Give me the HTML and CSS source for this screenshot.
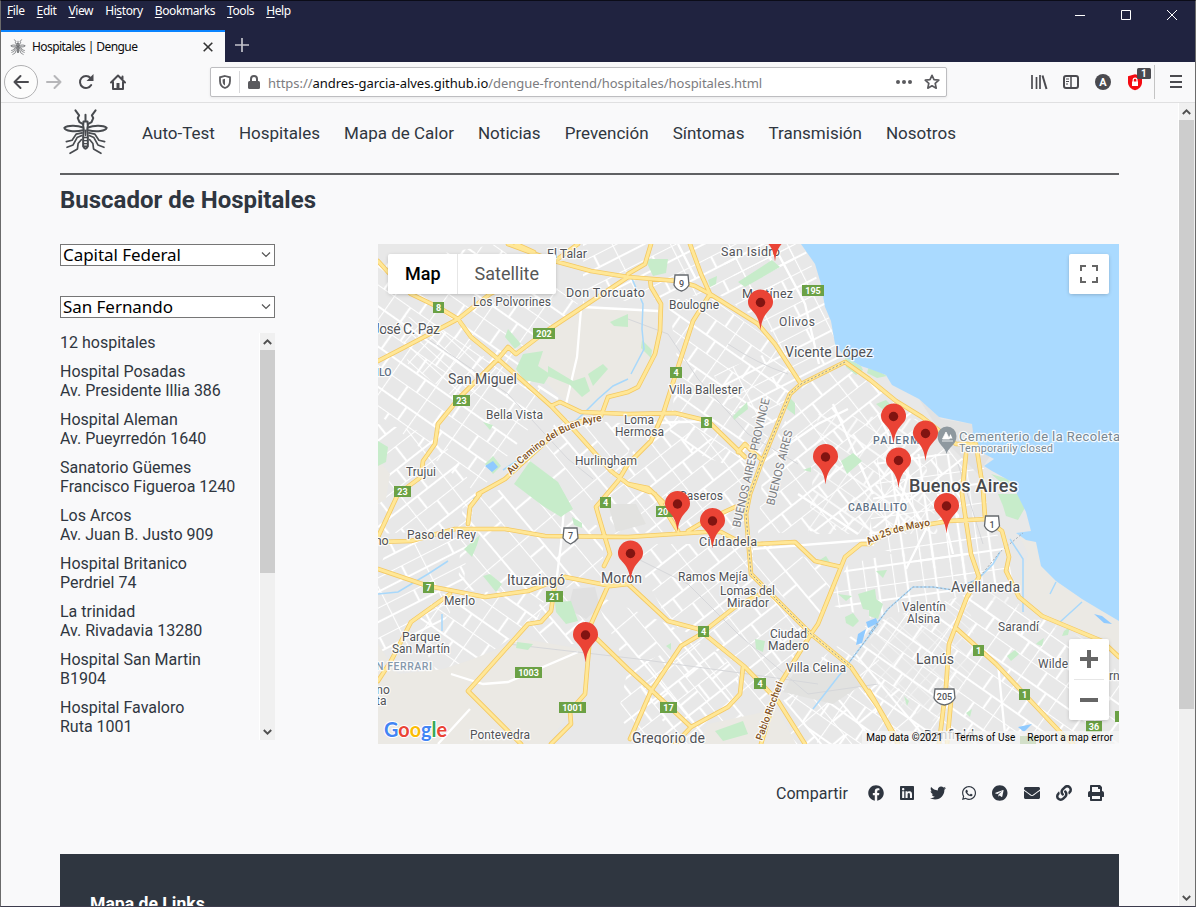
FILE: index.html
```html
<!DOCTYPE html>
<html lang="es">
<head>
<meta charset="utf-8">
<title>Hospitales | Dengue</title>
<link rel="stylesheet" href="styles.css">
</head>
<body>
<div class="window">
<header class="chrome">
  <div class="menubar">
    <nav class="menus"><span><u>F</u>ile</span><span><u>E</u>dit</span><span><u>V</u>iew</span><span>Hi<u>s</u>tory</span><span><u>B</u>ookmarks</span><span><u>T</u>ools</span><span><u>H</u>elp</span></nav>
    <svg class="winctl" width="102" height="12" viewBox="0 0 102 12"><path d="M0 5.5h10M46.500 .5h9v9h-9zM92 0l10 10M102 0L92 10" fill="none" stroke="#fff"/></svg>
  </div>
  <div class="tabs">
    <div class="tab">
      <svg width="16" height="16" viewBox="185 322 140 140"><use href="#bug"/></svg>
      <span class="tabname">Hospitales | Dengue</span>
      <svg width="10" height="10" viewBox="0 0 10 10"><path d="M.7.700l8.600 8.600M9.300.7L.7 9.300" stroke="#333" stroke-width="1.600"/></svg>
    </div>
    <svg class="plus" width="14" height="14" viewBox="0 0 14 14"><path d="M7 0v14M0 7h14" stroke="#c4c4cc" stroke-width="1.700"/></svg>
  </div>
</header>
<div class="toolbar">
  <div class="back"><svg width="16" height="14" viewBox="0 0 16 14"><path d="M15 7H1.500M7.500 1l-6 6 6 6" class="ico"/></svg></div>
  <svg class="fwd" width="16" height="14" viewBox="0 0 16 14"><path d="M1 7h13.500M8.500 1l6 6-6 6" class="ico"/></svg>
  <svg class="reload" width="16" height="16" viewBox="0 0 16 16"><path d="M13.200 11A6 6 0 1 1 12.500 4" class="ico"/><path d="M15.500 0v7h-7z" fill="#4a4a4f"/></svg>
  <svg class="home" width="16" height="16" viewBox="0 0 16 16"><path d="M1 8.500L8 1.500l7 7M3 7.500V15h10V7.500M12.500 6V2.500" class="ico"/><path d="M6.500 9h3v6h-3z" fill="#4a4a4f"/></svg>
  <div class="url">
    <svg width="12" height="14" viewBox="0 0 12 14"><path d="M6 1l5 1.300V6c0 3.500-2 6-5 7-3-1-5-3.500-5-7V2.300z" fill="none" stroke="#5a5a5e" stroke-width="1.800"/><path d="M6 3.800v6.700C4.200 9.500 3.600 8 3.600 6V4.400z" fill="#5a5a5e"/></svg>
    <i class="urlsep"></i>
    <svg width="12" height="14" viewBox="0 0 12 14"><path d="M3 7V4a3 3 0 0 1 6 0v3" fill="none" stroke="#5a5a5e" stroke-width="2"/><rect y="6" width="12" height="8" rx="1.500" fill="#5a5a5e"/></svg>
    <span class="address">https://<b>andres-garcia-alves.github.io</b>/dengue-frontend/hospitales/hospitales.html</span>
    <svg width="16" height="4" viewBox="0 0 16 4"><g fill="#5a5a5e"><circle cx="2" cy="2" r="2"/><circle cx="8" cy="2" r="2"/><circle cx="14" cy="2" r="2"/></g></svg>
    <svg class="star" width="16" height="16" viewBox="0 0 16 16"><path d="M8 1.300l2 4.400 4.800.5-3.600 3.200 1 4.800L8 11.800l-4.200 2.400 1-4.800L1.200 6.200 6 5.700z" fill="none" stroke="#5a5a5e" stroke-width="1.700" stroke-linejoin="round"/></svg>
  </div>
  <svg class="tools" width="158" height="34" viewBox="0 0 158 34">
    <g fill="none" stroke="#4a4a4f" stroke-width="2"><path d="M2 10v14M6.500 12v12M10 10v14" stroke-width="1.700"/><path d="M12.500 10.500L16.500 24"/><rect x="34" y="11" width="14" height="12" rx="2"/><path d="M41 11v12" stroke-width="1.500"/><path d="M36 14h3M36 16.500h3M36 19h2" stroke-width="1"/><path d="M140 11h12M140 17h12M140 22h12"/></g>
    <circle cx="73" cy="17" r="8" fill="#4a4a4f"/><text x="69.300" y="21" class="acct">A</text>
    <path d="M105 9.200l7 2v6c0 4-3 7-7 8-4-1-7-4-7-8v-6z" fill="#f40b12"/><path d="M103.200 17v-2a1.900 1.900 0 0 1 3.800 0v2" fill="none" stroke="#fff" stroke-width="1.200"/><rect x="102" y="16.500" width="6" height="4.500" fill="#fff"/>
    <rect x="107" y="3" width="14" height="11" rx="1.500" fill="#4a4a4f"/><text x="111" y="12" class="count">1</text>
    <path d="M124.500 0v34" stroke="#c4c4c4"/>
  </svg>
</div>
<div class="viewport">
<main class="page">
  <nav class="site">
    <svg width="47" height="47" viewBox="185 322 140 140"><defs><g id="bug" fill="none" stroke="#484b4f" stroke-width="6" stroke-linecap="round" stroke-linejoin="round">
      <path d="M255 342v18M249 362h12l1 12-2 14 2 20v28q-7 14-14 0v-28l2-20-2-14z"/><path d="M250 410h10M250 419h10M250 428h10M250 436h10" stroke-width="4"/><path d="M255 388v16" stroke-width="4"/>
      <path d="M248 380c-18-7-46-7-56 1 2 10 30 13 56 7M262 380c18-7 46-7 56 1-2 10-30 13-56 7"/>
      <path d="M248 370l-11-6-5-12 4-8-11-15M262 370l11-6 5-12-4-8 11-15"/>
      <path d="M245 396l-18 4-12 18-17 4M265 396l18 4 12 18 17 4M244 404l-14 6-12 22-18 7M266 404l14 6 12 22 18 7M243 416l-10 12-2 16-22 13M267 416l10 12 2 16 22 13" stroke-width="5"/></g></defs><use href="#bug"/></svg>
    <a>Auto-Test</a><a>Hospitales</a><a>Mapa de Calor</a><a>Noticias</a><a>Prevención</a><a>Síntomas</a><a>Transmisión</a><a>Nosotros</a>
  </nav>
  <h1>Buscador de Hospitales</h1>
  <section class="finder">
    <div class="side">
      <div class="combo"><select><option>Capital Federal</option></select><svg width="10" height="6" viewBox="0 0 10 6"><path d="M1 .5l4 4 4-4" fill="none" stroke="#555" stroke-width="1.200"/></svg></div>
      <div class="combo second"><select><option>San Fernando</option></select><svg width="10" height="6" viewBox="0 0 10 6"><path d="M1 .5l4 4 4-4" fill="none" stroke="#555" stroke-width="1.200"/></svg></div>
      <div class="results">
        <div class="list">
          <p>12 hospitales</p>
          <p>Hospital Posadas<br>Av. Presidente Illia 386</p>
          <p>Hospital Aleman<br>Av. Pueyrredón 1640</p>
          <p>Sanatorio Güemes<br>Francisco Figueroa 1240</p>
          <p>Los Arcos<br>Av. Juan B. Justo 909</p>
          <p>Hospital Britanico<br>Perdriel 74</p>
          <p>La trinidad<br>Av. Rivadavia 13280</p>
          <p>Hospital San Martin<br>B1904</p>
          <p>Hospital Favaloro<br>Ruta 1001</p>
        </div>
        <div class="bar small"><svg width="9" height="6" viewBox="0 0 9 6"><path d="M.8 5l3.700-3.700L8.200 5" class="chev"/></svg><i></i><svg width="9" height="6" viewBox="0 0 9 6"><path d="M.8 1l3.700 3.700L8.200 1" class="chev"/></svg></div>
      </div>
    </div>
    <div class="map">
      <svg class="tiles" width="741" height="500" viewBox="0 0 741 500">
        <defs>
          <pattern id="s1" width="17" height="11" patternUnits="userSpaceOnUse" patternTransform="rotate(42)"><path d="M0 0h17M0 0v11" class="st"/></pattern>
          <pattern id="s2" width="46" height="34" patternUnits="userSpaceOnUse" patternTransform="rotate(-38)"><path d="M0 0h46M0 0v34M0 19h46M27 0v19M14 19v15" class="st"/></pattern>
          <pattern id="s3" width="52" height="27" patternUnits="userSpaceOnUse" patternTransform="rotate(-27)"><path d="M0 0h52M0 0v27M0 13h52M31 0v13" class="st"/></pattern>
          <pattern id="s4" width="29" height="34" patternUnits="userSpaceOnUse" patternTransform="rotate(-8)"><path d="M0 0h29M0 0v34M0 15h29M13 0v34" class="st"/></pattern>
          <pattern id="s5" width="64" height="42" patternUnits="userSpaceOnUse" patternTransform="rotate(50)"><path d="M0 0h64M0 0v42M0 24h64M36 0v24M18 24v18" class="st"/></pattern>
          <pattern id="s6" width="43" height="33" patternUnits="userSpaceOnUse" patternTransform="rotate(35)"><path d="M0 0h43M0 0v33M0 18h43M20 0v18M31 18v15" class="st"/></pattern>
          <g id="pin"><path d="M0 27.500C-1 19-3 14-7 9.500-10 6-12.500 4-12.500-.5a12.500 12.500 0 0 1 25 0C12.500 4 10 6 7 9.500 3 14 1 19 0 27.500z" fill="#ea4335"/><circle r="4.700" fill="#811411"/></g>
          <path id="ayre" d="M133 231Q178 181 226 177"/><path id="mayo" d="M491 301Q512 287 557 281"/>
        </defs>
        <rect width="741" height="500" fill="#e8e8e8"/>
        <g>
          <path d="M0 20L120 0 200 60 150 110 170 160 100 250 0 170z" fill="url(#s6)"/>
          <path d="M20 70L75 85 120 125 85 160 30 120z" fill="url(#s1)"/>
          <path d="M205 0H425L380 75 340 50 205 60z" fill="url(#s3)"/>
          <path d="M290 55L335 55 398 100 423 140 405 155 375 230 290 200 300 120z" fill="url(#s6)"/>
          <path d="M335 130L400 105 423 140 412 150 395 190 350 155z" fill="url(#s3)"/>
          <path d="M340 10L425 0 445 50 455 90 467 118 425 140 385 75z" fill="url(#s3)"/>
          <path d="M425 142L467 120 520 160 590 205 580 280 380 290 385 220z" fill="url(#s2)"/>
          <path d="M440 170L540 175 560 290 430 290z" fill="url(#s6)" opacity=".8"/>
          <path d="M500 210L605 210 610 275 625 300 640 350 600 340 490 300z" fill="url(#s4)"/>
          <path d="M375 295L460 325 440 380 375 330z" fill="url(#s5)"/>
          <path d="M470 320L600 290 590 350 495 375 450 360z" fill="url(#s4)"/>
          <path d="M490 380L590 350 660 370 741 440V500H440L400 445z" fill="url(#s6)"/>
          <path d="M490 380L590 350 600 420 560 480 500 450z" fill="url(#s1)" opacity=".45"/>
          <path d="M610 340L660 372 720 402 741 430 700 440 640 395 580 385z" fill="url(#s6)" opacity=".6"/>
          <path d="M250 300L375 300 375 335 430 390 400 450 365 423 290 377z" fill="url(#s2)"/>
          <path d="M215 350L290 380 365 425 400 460 427 500H300L250 425z" fill="url(#s5)"/>
          <path d="M250 425L320 395 360 425 360 455 310 485 260 500 240 470z" fill="url(#s2)"/>
          <path d="M290 170L370 215 370 285 235 290 225 240z" fill="url(#s2)"/>
          <path d="M0 180L60 190 100 250 90 285 0 290z" fill="url(#s2)"/>
          <path d="M85 255L145 240 225 285 225 340 125 350 80 345z" fill="url(#s5)"/>
          <path d="M10 300L90 290 85 350 50 400 0 420 0 330z" fill="url(#s3)"/>
          <path d="M60 350L170 345 160 375 110 410 60 430 35 385z" fill="url(#s6)"/>
          <path d="M170 350L225 345 210 400 130 400z" fill="url(#s5)"/>
          <path d="M180 175L260 180 240 240 200 265 145 225z" fill="url(#s5)"/>
          <path d="M400 460L490 400 560 500H425z" fill="url(#s5)"/>
        </g>
        <g fill="#ebe9e4">
          <path d="M203 63L283 68 278 110 260 145 228 155 215 170 185 155 148 118 150 100 165 92z"/>
          <path d="M0 260V215L12 230 8 255zM0 400L20 430 65 425 95 415 145 395 205 405 207 450 190 470 170 500H0z"/>
          <path d="M330 480L400 465 418 500H320zM640 289L658 298 663 322 704 355 741 377V412L700 390 660 368 640 340 650 310z"/>
          <path d="M230 260h28l10 20-30 8zM415 430l60-5 10 15-30 20-50-12z" fill="#e2e2e0"/>
          <path d="M195 345l22-2 5 20-14 12-18-10z" fill="#e0e0e0"/>
          <path d="M541 155L563 175 595 180 600 205 612 212 600 230 570 200z" fill="#e2e2e2"/>
        </g>
        <path d="M203 65L199 113 188 160M205 63L280 67M60 500L92 465M73 430L105 440 130 438 200 408M160 142L180 155M187 253L183 300 178 340M250 180L330 177M375 305L500 295M382 220L440 180 470 165M620 420l8 80M560 250l15 60M500 170l30 60-15 60M455 160l40 90M420 250l60 40M518 235l30 50-20 40M300 0l18 35M395 0l32 60 14 60" fill="none" stroke="#fff" stroke-width="2.300"/>
        <g fill="none" stroke="#d6d7da" stroke-width="1"><path d="M50 95L130 150 190 215 215 235M250 75L290 90 320 135 370 190 420 220M350 100q30 20 60 30M250 310L310 340 360 390 430 450 500 440M130 400L260 415 370 430 440 440M580 220L605 300"/></g>
        <g fill="#c7ecca">
          <path d="M130 85l13 15-6 5-10-12zM145 110l20-3-5 15 12 8-6 10-20-4-8-11zM170 122l25 15 12-4 5 14-8 6-12-12-22-9zM210 130l15-10 5 5-15 17zM232 78l18-8v13l-14-1zM136 240l16-23 28 21 15 27-8 5-4 3-18-11zM0 197l10 6-2 15-8 4zM105 178l10 3-3 5zM107 220l8-8 8 10-8 8z"/>
          <path d="M267 15h23l-2 14-13 3zM360 38l34-22 8 7-35 20zM330 36l9-4-1 8-6 3zM264 96l10 10-1 8-10-10zM355 172l14-14 1 7-14 11zM410 152l7 7v12l-8-6zM463 217l12-8 9 8-15 13zM467 113l16 9 2 4-7 5-10-8zM491 122l18 10-10 2-10-5zM498 160l10-4 8 8-8 4zM613 230l17 5 5 11-10-6zM620 250h25l3 12-8 14-12-4-3-10zM425 226l8-3v5z"/>
          <path d="M105 332l7-2 12 10-6 8zM86 305l8 8 5-12 3-10M177 358l16-1 7 20-12 3-10-12zM139 398l16 2-5 6-12-2zM194 273l10 6v5l-8-3zM337 487l28-10 5 13-25 7zM377 395l10 2-2 11-7-3zM480 350l17-5 3 23-15-3zM460 350l14 2-6 5zM467 373l8-4 6 8-6 6-7-4zM491 350l14 10-5 15-9-3zM498 327l11-1-4 8zM440 317l8-5 5 8zM686 387l6-4-2 8-6 1zM660 398l6-4-2 8-6-2zM629 412l8-6 4 4-8 7zM526 452l5 5-2 5zM588 469l6-4-2 8zM288 402l5-3v7z"/>
        </g>
        <path d="M423 0L437 20 443 40 447 63 453 77 457 100 467 113 483 122 492 125 508 131 514 141 541 155 561 173 594 180 595 188 592 192 601 207 616 215 606 222 614 227 634 238 640 252 648 268 653 287 638 289 648 296 658 298 663 322 678 337 704 355 724 367 741 377V0z" fill="#aadaff"/>
        <g fill="none" stroke="#a8d8fb" stroke-width="1.500"><path d="M252 30L265 60 264 85 266 105 253 130M250 135L235 142 220 155 205 170 192 182 125 226M102 250L95 255M0 350L20 348 50 330 70 317M491 390L510 365 535 343 555 343 575 346 600 335 615 320 622 308M632 295L645 315 645 368M672 350l6-12M682 378l22-20M500 380L470 420 435 465M64 370v17" /></g>
        <path d="M107 222l8-5 5 6-6 5zM488 378l10-4 2 5-10 5zM480 390l8-5-4 14-6 2zM716 370l8 2 10 8-8-1zM640 483l14-3-8 8z" fill="#8fcaff"/>
        <path d="M491 390L510 365 535 343 555 343 575 346 600 335 622 308 645 289M470 420L500 380" fill="none" stroke="#a2a9b0" stroke-dasharray="2 2"/>
        <g id="roads" fill="none" stroke-linejoin="round" stroke-linecap="round">
          <g stroke="#f4c963" stroke-width="4.600"><use href="#rd"/></g>
          <g stroke="#ffe797" stroke-width="3"><path id="rd" d="M130 0L157 10 180 18 213 27 250 33 300 37 317 42 332 50 380 80 397 100 423 140M138 0l18 8M0 17L10 28 33 50 60 63 80 75 93 93 120 115 173 162 197 187 233 227 250 240 272 248M0 117L27 103 80 75 112 50 173 20 200 0M250 33L167 88 138 110 130 103 120 115 82 153 60 180 57 200 45 217 43 233 20 250 0 293M100 250L127 235 140 223 173 193 193 180 223 172 230 153 250 148 260 143 277 110 282 87 283 60 273 43 272 35M250 30L267 20 273 0M90 280L92 263 102 250M173 162L182 158 203 168 250 170 297 169 330 177 367 213M360 208L367 200 375 208 384 216M312 0L323 30 332 50 315 77 300 123 285 170 273 197 250 220 240 237 218 263 225 287 232 310 226 322M741 413L724 397 664 372 641 353 628 327 631 313 624 287 608 275 571 277 511 287 491 300 483 300 467 313 440 380 433 390 400 443 383 500M607 273L605 245 598 200 578 200 544 173 518 157 491 135 467 118 423 140 412 150 383 220 372 250 368 270 373 330 433 390 473 423 500 463 520 500M588 210L584 250 588 277 593 310 601 333 589 353 571 400 568 443 561 500M573 457L569 500M380 300L417 298 437 317 463 323M579 385L618 420 651 455 684 490 695 500M491 447L516 490 520 500M0 298L33 297 77 285 127 285 167 292 250 293 327 288 343 288 360 297 380 300M277 250L300 287M310 287L327 277 357 263M0 325L50 342 107 353 150 347 187 333 233 342 250 340 290 377 320 385 330 393 367 423 400 457 427 500M382 350L357 363 320 392 303 402 273 447 252 495M217 393L250 425 270 443 313 483M297 500L313 483 350 463 362 450 365 423M230 342L213 380 207 450 192 467 193 480 173 500M187 333L177 340 173 367 163 378 150 380 90 447 143 500M72 350L33 378 13 417 0 437M250 240L270 244 285 258"/></g>
        </g>
        <path d="M467 118L423 140 412 150 383 220 372 250 368 270 373 330 433 390 473 423" fill="none" stroke="#9a9a90" stroke-dasharray="2 2"/>
        <g class="lbl">
          <text x="169" y="14" textLength="40">El Talar</text><text x="188" y="53" textLength="79">Don Torcuato</text><text x="95" y="62" textLength="78" class="s">Los Polvorines</text>
          <text x="-6" y="90" textLength="68" class="m">José C. Paz</text><text x="-2" y="132" class="d xs">ILO</text><text x="70" y="140" textLength="69" class="m">San Miguel</text>
          <text x="108" y="175" textLength="57" class="s">Bella Vista</text><text x="197" y="221" textLength="62" class="s">Hurlingham</text><text x="28" y="232" textLength="30" class="s">Trujui</text>
          <text x="246" y="180" textLength="30" class="s">Loma</text><text x="237" y="192" textLength="49" class="s">Hermosa</text>
          <text x="343" y="12" textLength="59">San Isidro</text><text x="364" y="54" textLength="51">Martínez</text><text x="291" y="65" textLength="50" class="s">Boulogne</text><text x="401" y="82" textLength="36" class="s">Olivos</text>
          <text x="407" y="113" textLength="88" class="m">Vicente López</text><text x="291" y="150" textLength="73" class="s">Villa Ballester</text><text x="301" y="256" textLength="44" class="s">Caseros</text>
          <text x="29" y="295" textLength="69" class="s">Paso del Rey</text><text x="-10" y="301">eno</text><text x="129" y="341" textLength="58" class="m">Ituzaingó</text><text x="66" y="361" textLength="31" class="s">Merlo</text>
          <text x="24" y="397" textLength="38" class="s">Parque</text><text x="14" y="409" textLength="58" class="s">San Martín</text><text x="-2" y="426" textLength="56" class="d xs ferrari">N FERRARI</text><text x="-8" y="450" class="s">eno</text><text x="-2" y="461" class="s">ta</text><text x="92" y="495" textLength="60" class="s">Pontevedra</text>
          <text x="223" y="339" textLength="41" class="m">Morón</text><text x="321" y="302" textLength="58">Ciudadela</text><text x="300" y="337" textLength="70" class="s">Ramos Mejía</text><text x="342" y="351" textLength="55" class="s">Lomas del</text><text x="349" y="363" textLength="42" class="s">Mirador</text>
          <text x="392" y="394" textLength="37" class="s">Ciudad</text><text x="390" y="406" textLength="41" class="s">Madero</text><text x="408" y="428" textLength="60" class="s">Villa Celina</text><text x="254" y="499" textLength="73" class="m">Gregorio de</text>
          <text x="524" y="367" textLength="44" class="s">Valentín</text><text x="529" y="379" textLength="33" class="s">Alsina</text><text x="573" y="348" textLength="69" class="m">Avellaneda</text><text x="538" y="420" textLength="38" class="m">Lanús</text><text x="620" y="387" textLength="41" class="s">Sarandí</text><text x="660" y="424" textLength="30" class="s">Wilde</text><text x="731" y="436" class="s">rnal</text><text x="546" y="495" textLength="50">Banfield</text>
          <text x="495" y="200" textLength="55" class="d">PALERMO</text><text x="470" y="267" textLength="59" class="d">CABALLITO</text><text x="531" y="248" textLength="109" class="big">Buenos Aires</text>
          <text x="581" y="197" textLength="161" class="poi">Cementerio de la Recoleta</text><text x="581" y="208" textLength="94" class="poi xs">Temporarily closed</text>
          <text transform="translate(362 284) rotate(-77)" textLength="132" class="prov">BUENOS AIRES PROVINCE</text><text transform="translate(396 262) rotate(-76)" textLength="77" class="prov">BUENOS AIRES</text>
          <g class="hw"><text textLength="108"><textPath href="#ayre">Au Camino del Buen Ayre</textPath></text><text textLength="65"><textPath href="#mayo">Au 25 de Mayo</textPath></text><text transform="translate(384 497) rotate(-70)" textLength="62">Pablo Riccheri</text></g>
        </g>
        <g class="shield">
          <path d="M55 58h11v11H55zM155 84h22v11h-22zM75 151h17v11H75zM16 242h17v11H16zM424 41h22v11h-22zM292 123h12v11h-12zM323 173h11v11h-11zM222 253h11v11h-11zM45 338h11v11H45zM168 347h17v11h-17zM137 423h27v11h-27zM181 458h27v11h-27zM278 262h17v11h-17zM320 382h11v11h-11zM376 434h12v11h-12zM282 458h17v11h-17zM595 401h11v11h-11zM641 445h11v11h-11zM708 477h16v11h-16zM737 467h10v11h-10zM642 492h16v11h-16z"/>
          <g><text x="60.500" y="67">8</text><text x="166" y="93">202</text><text x="83.500" y="160">23</text><text x="24.500" y="251">23</text><text x="435" y="50">195</text><text x="298" y="132">4</text><text x="328.500" y="182">8</text><text x="227.500" y="262">4</text><text x="50.500" y="347">7</text><text x="176.500" y="356">21</text><text x="150.500" y="432">1003</text><text x="194.500" y="467">1001</text><text x="285" y="271">20</text><text x="325.500" y="391">4</text><text x="382" y="443">4</text><text x="290.500" y="467">17</text><text x="600.500" y="410">1</text><text x="646.500" y="454">1</text><text x="716" y="486">36</text></g>
        </g>
        <g class="route"><path d="M297 31h13l1 10q-3 5-7.500 6-5-1-7.500-6zM186 284h13l1 10q-3 4-7.500 6-5-2-7.500-6zM607.500 272h13l1 10q-3 5-7.500 6-5-1-7.500-6zM557 445h19l1 9q-3 6-10.500 7-8-1-10.500-7z"/><text x="303.500" y="43">9</text><text x="192.500" y="295">7</text><text x="614" y="284">1</text><text x="566.500" y="456">205</text></g>
        <path d="M568.500 210c-1-7-9-9-9-18a9 9 0 0 1 19 0c0 9-8 11-10 18z" fill="#8e989f"/><path d="M564 197h11M568 188l3.500 7h-7z" fill="#fff" stroke="#fff" stroke-width=".8"/><path d="M572.500 190l2 4.500h-4z" fill="#fff"/>
        <use href="#pin" x="397" y="-10"/><use href="#pin" x="382.500" y="58.500"/><use href="#pin" x="515.500" y="172.500"/><use href="#pin" x="547.500" y="189.500"/><use href="#pin" x="447.500" y="213"/><use href="#pin" x="520.500" y="216.500"/><use href="#pin" x="299.500" y="260"/><use href="#pin" x="334.500" y="277"/><use href="#pin" x="568.500" y="262"/><use href="#pin" x="252.500" y="309.500"/><use href="#pin" x="207.500" y="391"/>
        <text class="logo" x="6" y="493" textLength="63" lengthAdjust="spacingAndGlyphs"><tspan fill="#4285f4">G</tspan><tspan fill="#ea4335">o</tspan><tspan fill="#fbbc04">o</tspan><tspan fill="#4285f4">g</tspan><tspan fill="#34a853">l</tspan><tspan fill="#ea4335">e</tspan></text>
      </svg>
      <div class="maptype"><b>Map</b><span>Satellite</span></div>
      <div class="full"><svg width="18" height="18" viewBox="0 0 18 18"><path d="M1 6V1h5M12 1h5v5M17 12v5h-5M6 17H1v-5" fill="none" stroke="#666" stroke-width="2"/></svg></div>
      <div class="zoom"><svg width="18" height="18" viewBox="0 0 18 18"><path d="M9 0v18M0 9h18" stroke="#666" stroke-width="4"/></svg><hr><svg width="18" height="18" viewBox="0 0 18 18"><path d="M0 9h18" stroke="#666" stroke-width="4"/></svg></div>
      <div class="credits"><span>Map data ©2021</span><span>Terms of Use</span><span>Report a map error</span></div>
    </div>
  </section>
  <section class="share"><span>Compartir</span>
    <svg width="16" height="16" viewBox="0 0 512 512"><path d="M504 256C504 119 393 8 256 8S8 119 8 256c0 123.780 90.690 226.380 209.250 245V327.690h-63V256h63v-54.640c0-62.150 37-96.480 93.670-96.480 27.140 0 55.520 4.840 55.520 4.840v61h-31.280c-30.800 0-40.410 19.120-40.410 38.730V256h68.780l-11 71.690h-57.780V501C413.310 482.380 504 379.780 504 256z"/></svg>
    <svg width="14" height="16" viewBox="0 0 448 512"><path d="M416 32H31.900C14.300 32 0 46.500 0 64.300v383.400C0 465.500 14.300 480 31.900 480H416c17.600 0 32-14.500 32-32.300V64.300c0-17.800-14.400-32.300-32-32.300zM135.400 416H69V202.200h66.500V416zm-33.200-243c-21.300 0-38.500-17.300-38.500-38.500S80.900 96 102.200 96c21.200 0 38.500 17.300 38.500 38.500 0 21.300-17.200 38.500-38.500 38.500zm282.100 243h-66.400V312c0-24.800-.5-56.700-34.500-56.700-34.600 0-39.900 27-39.900 54.900V416h-66.400V202.200h63.700v29.200h.9c8.900-16.800 30.600-34.500 62.900-34.500 67.200 0 79.700 44.300 79.700 101.900V416z"/></svg>
    <svg width="16" height="16" viewBox="0 0 512 512"><path d="M459.370 151.716c.325 4.548.325 9.097.325 13.645 0 138.720-105.583 298.558-298.558 298.558-59.452 0-114.680-17.219-161.137-47.106 8.447.974 16.568 1.299 25.340 1.299 49.055 0 94.213-16.568 130.274-44.832-46.132-.975-84.792-31.188-98.112-72.772 6.498.974 12.995 1.624 19.818 1.624 9.421 0 18.843-1.300 27.614-3.573-48.081-9.747-84.143-51.980-84.143-102.985v-1.299c13.969 7.797 30.214 12.670 47.431 13.319-28.264-18.843-46.781-51.005-46.781-87.391 0-19.492 5.197-37.360 14.294-52.954 51.655 63.675 129.300 105.258 216.365 109.807-1.624-7.797-2.599-15.918-2.599-24.040 0-57.828 46.782-104.934 104.934-104.934 30.213 0 57.502 12.670 76.670 33.137 23.715-4.548 46.456-13.320 66.599-25.340-7.798 24.366-24.366 44.833-46.132 57.827 21.117-2.273 41.584-8.122 60.426-16.243-14.292 20.791-32.161 39.308-52.628 54.253z"/></svg>
    <svg width="14" height="16" viewBox="0 0 448 512"><path d="M380.900 97.100C339 55.100 283.200 32 223.900 32c-122.400 0-222 99.600-222 222 0 39.100 10.200 77.300 29.600 111L0 480l117.700-30.900c32.400 17.700 68.900 27 106.100 27h.1c122.300 0 224.100-99.600 224.100-222 0-59.300-25.200-115-67.100-157zm-157 341.600c-33.200 0-65.700-8.900-94-25.700l-6.700-4-69.800 18.300L72 359.200l-4.400-7c-18.500-29.400-28.200-63.300-28.200-98.200 0-101.700 82.800-184.500 184.600-184.500 49.300 0 95.600 19.200 130.400 54.100 34.800 34.900 56.200 81.200 56.100 130.500 0 101.800-84.900 184.600-186.600 184.600zm101.200-138.200c-5.500-2.800-32.800-16.200-37.900-18-5.100-1.900-8.800-2.800-12.500 2.800-3.700 5.600-14.300 18-17.600 21.800-3.200 3.700-6.500 4.200-12 1.400-32.600-16.300-54-29.100-75.500-66-5.700-9.800 5.700-9.100 16.300-30.300 1.800-3.700.9-6.900-.5-9.700-1.400-2.800-12.500-30.100-17.100-41.200-4.500-10.800-9.100-9.300-12.500-9.500-3.200-.2-6.900-.2-10.600-.2-3.700 0-9.700 1.400-14.800 6.900-5.100 5.600-19.400 19-19.400 46.300 0 27.300 19.900 53.700 22.600 57.400 2.800 3.700 39.100 59.700 94.800 83.800 35.200 15.200 49 16.500 66.600 13.900 10.700-1.600 32.800-13.400 37.400-26.400 4.600-13 4.600-24.100 3.200-26.400-1.300-2.500-5-3.900-10.500-6.600z"/></svg>
    <svg width="15.500" height="16" viewBox="0 0 496 512"><path d="M248 8C111 8 0 119 0 256s111 248 248 248 248-111 248-248S385 8 248 8zm121.800 169.900l-40.700 191.800c-3 13.600-11.100 16.900-22.400 10.500l-62-45.700-29.900 28.800c-3.300 3.300-6.100 6.100-12.500 6.100l4.400-63.100 114.900-103.800c5-4.400-1.100-6.900-7.700-2.500l-142 89.400-61.200-19.100c-13.300-4.200-13.600-13.300 2.800-19.700l239.100-92.200c11.100-4 20.800 2.700 17.200 19.500z"/></svg>
    <svg width="16" height="16" viewBox="0 0 512 512"><path d="M502.300 190.800c3.900-3.100 9.700-.2 9.700 4.700V400c0 26.500-21.500 48-48 48H48c-26.500 0-48-21.500-48-48V195.600c0-5 5.700-7.800 9.700-4.700 22.400 17.400 52.100 39.500 154.100 113.600 21.100 15.400 56.700 47.800 92.200 47.600 35.700.3 72-32.800 92.300-47.600 102-74.100 131.600-96.300 154-113.700zM256 320c23.200.4 56.600-29.200 73.400-41.400 132.700-96.300 142.800-104.700 173.400-128.700 5.800-4.500 9.200-11.500 9.200-18.900v-19c0-26.500-21.500-48-48-48H48c-26.500 0-48 21.500-48 48v19c0 7.400 3.400 14.300 9.200 18.900 30.600 23.900 40.700 32.400 173.400 128.700 16.800 12.200 50.200 41.800 73.400 41.400z"/></svg>
    <svg width="16" height="16" viewBox="0 0 512 512"><path d="M326.612 185.391c59.747 59.809 58.927 155.698.36 214.590-.11.12-.24.25-.36.37l-67.200 67.200c-59.270 59.270-155.699 59.262-214.960 0-59.270-59.260-59.270-155.700 0-214.960l37.106-37.106c9.840-9.840 26.786-3.300 27.294 10.606.648 17.722 3.826 35.527 9.690 52.721 1.986 5.822.567 12.262-3.783 16.612l-13.087 13.087c-28.026 28.026-28.905 73.660-1.155 101.960 28.024 28.579 74.086 28.749 102.325.51l67.200-67.190c28.191-28.191 28.073-73.757 0-101.830-3.701-3.694-7.429-6.564-10.341-8.569a16.037 16.037 0 0 1-6.947-12.606c-.396-10.567 3.348-21.456 11.698-29.806l21.054-21.055c5.521-5.521 14.182-6.199 20.584-1.731a152.482 152.482 0 0 1 20.522 17.197zM467.547 44.449c-59.261-59.262-155.690-59.270-214.960 0l-67.200 67.200c-.12.12-.25.25-.36.37-58.566 58.892-59.387 154.781.36 214.590a152.454 152.454 0 0 0 20.521 17.196c6.402 4.468 15.064 3.789 20.584-1.731l21.054-21.055c8.350-8.350 12.094-19.239 11.698-29.806a16.037 16.037 0 0 0-6.947-12.606c-2.912-2.005-6.640-4.875-10.341-8.569-28.073-28.073-28.191-73.639 0-101.830l67.200-67.190c28.239-28.239 74.300-28.069 102.325.51 27.750 28.300 26.872 73.934-1.155 101.960l-13.087 13.087c-4.350 4.350-5.769 10.790-3.783 16.612 5.864 17.194 9.042 34.999 9.690 52.721.509 13.906 17.454 20.446 27.294 10.606l37.106-37.106c59.271-59.259 59.271-155.699.001-214.959z"/></svg>
    <svg width="16" height="16" viewBox="0 0 512 512"><path d="M448 192V77.250c0-8.490-3.370-16.620-9.370-22.630L393.370 9.370c-6-6-14.140-9.370-22.630-9.370H96C78.330 0 64 14.330 64 32v160c-35.350 0-64 28.650-64 64v112c0 8.840 7.160 16 16 16h48v96c0 17.670 14.330 32 32 32h320c17.670 0 32-14.330 32-32v-96h48c8.840 0 16-7.160 16-16V256c0-35.350-28.650-64-64-64zm-64 256H128v-96h256v96zm0-224H128V64h192v48c0 8.840 7.160 16 16 16h48v96z"/></svg>
  </section>
  <footer>Mapa de Links</footer>
</main>
<div class="bar"><svg width="9" height="6" viewBox="0 0 9 6"><path d="M.8 5l3.700-3.700L8.200 5" class="chev"/></svg><i></i><svg width="9" height="6" viewBox="0 0 9 6"><path d="M.8 1l3.700 3.700L8.200 1" class="chev"/></svg></div>
</div>
</div>
</body>
</html>
```
FILE: styles.css
```css
*{box-sizing:border-box}
body{margin:0;width:1196px;height:907px;overflow:hidden;font-family:Roboto,sans-serif;color:#2f3640;background:#f9f9fa}
svg{display:block;flex:none;overflow:visible}
.window{width:1196px;height:907px;border:1px solid #6b6b6b;border-top-color:#0b0c18;border-bottom-color:#3c3b4c;display:flex;flex-direction:column;overflow:hidden}
.chrome{height:61px;flex:none;background:#202340;display:flex;flex-direction:column}
.menubar{height:29px;display:flex;justify-content:space-between;padding:2px 18px 0 6px}
.menus{display:flex;gap:12px;color:#fff;font:12px/15px "Noto Sans",sans-serif;letter-spacing:-.4px}
.menus u{text-underline-offset:2px}
.winctl{margin-top:7px}
.tabs{flex:1;display:flex;align-items:flex-start;gap:10px}
.tab{width:224px;height:32px;background:#f9f9fa;border-top:2px solid #0a84ff;display:flex;align-items:center;padding:0 12px 0 9px;gap:6px;color:#0c0c0d}
.tabname{flex:1;font:12px/16px "Noto Sans",sans-serif;letter-spacing:-.58px}
.plus{margin-top:8px}
.toolbar{height:41px;flex:none;background:#f9f9fa;border-bottom:1px solid #e0e0e1;display:flex;align-items:center;padding-left:3px}
.ico{fill:none;stroke:#4a4a4f;stroke-width:2;stroke-linecap:round;stroke-linejoin:round}
.back{width:34px;height:34px;border:1px solid #b0b0b2;border-radius:50%;display:flex;align-items:center;justify-content:center;background:#fcfcfc}
.fwd{margin-left:8px;opacity:.38}
.reload{margin-left:16px}
.home{margin-left:16px}
.url{width:737px;height:30px;margin-left:84px;background:#fff;border:1px solid #bdbdc0;border-radius:2px;display:flex;align-items:center;padding:0 6px 0 8px;box-shadow:0 1px 3px rgba(0,0,0,.07)}
.urlsep{width:1px;height:22px;background:#d8d8da;margin:0 8px}
.address{flex:1;margin:2px 0 0 8px;font:13px/18px "Noto Sans",sans-serif;color:#7c7c80;letter-spacing:-.035px;white-space:nowrap}
.address b{font-weight:400;color:#0c0c0d}
.star{margin-left:12px}
.tools{margin-left:83px}
.acct{font:bold 11px Roboto,sans-serif;fill:#fff}
.count{font:bold 10px Roboto,sans-serif;fill:#fff}
.viewport{flex:1;min-height:0;display:flex;overflow:hidden}
.page{flex:1;padding:0 59px;overflow:hidden}
.bar{width:17px;flex:none;background:#f0f0f0;border-left:1px solid #fff;display:flex;flex-direction:column;align-items:center;justify-content:space-between;padding:6px 1px 5px 0}
.bar i{width:15px;height:589px;background:#cdcdcd;margin:5px 0 auto}
.chev{fill:none;stroke:#505050;stroke-width:1.900}
.site{height:72px;border-bottom:2px solid #606163;display:flex;align-items:flex-start;padding:5px 0 0 1.500px;gap:24px;font-size:17px;line-height:20px}
.site svg{margin-right:9.500px}
.site a{margin-top:15px;letter-spacing:.01px;white-space:nowrap}
h1{margin:11px 0 30px;font-size:24px;line-height:28px;font-weight:700}
.finder{display:flex;justify-content:space-between;height:500px}
.side{width:215px}
.combo{height:22px;border:1px solid #767676;background:#fff;display:flex;align-items:center;padding-right:3px}
.combo.second{margin-top:30px}
.combo select{appearance:none;border:0;background:none;flex:1;padding:0 0 0 2px;font:17px/20px "Noto Sans",sans-serif;letter-spacing:-.05px;color:#000;height:20px}
.results{display:flex;margin-top:15px;height:407px;overflow:hidden}
.list{flex:1;overflow:hidden;font-size:16px;line-height:19px}
.list p{margin:0 0 10px;white-space:nowrap}
.bar.small{width:16px}
.bar.small i{height:223px}
.map{position:relative;width:741px;height:500px;overflow:hidden}
.tiles{overflow:hidden}
.st{fill:none;stroke:#fff;stroke-width:2.200}
.lbl{font:12.500px Roboto,sans-serif;fill:#515358}
.lbl text{paint-order:stroke;stroke:#fff;stroke-opacity:.85;stroke-width:2.500px;stroke-linejoin:round}
.lbl .s{font-size:12px}
.lbl .m{font-size:14px}
.lbl .xs{font-size:10px}
.lbl .d{font-weight:500;font-size:10.500px;fill:#607286}
.lbl .ferrari{fill:#8699ad}
.lbl .big{font-size:18px;font-weight:500;fill:#46484c}
.lbl .poi{font-size:13px;fill:#788791}
.lbl .poi.xs{font-size:11px}
.lbl .prov{font-size:11.500px;fill:#7b7d81;stroke-opacity:.5}
.lbl .hw{font-size:10px;font-weight:500;fill:#805020}
.shield path{fill:#6ba145}
.shield text{font:bold 9px Roboto,sans-serif;fill:#fff;text-anchor:middle}
.route path{fill:#fff;stroke:#65696e;stroke-width:1.300}
.route text{font:500 9px Roboto,sans-serif;fill:#505358;text-anchor:middle}
.logo{font:bold 20px Lato,sans-serif;paint-order:stroke;stroke:#fff;stroke-width:2px}
.maptype{position:absolute;left:10px;top:10px;display:flex;height:40px;background:#fff;border-radius:2px;box-shadow:0 1px 4px -1px rgba(0,0,0,.3);font-size:18px;line-height:40px;color:#565656}
.maptype b{padding:0 16px 0 17px;border-right:1px solid #e6e6e6;color:#000;font-weight:500}
.maptype span{padding:0 17px}
.full{position:absolute;right:10px;top:10px;width:40px;height:40px;background:#fff;border-radius:2px;box-shadow:0 1px 4px -1px rgba(0,0,0,.3);display:flex;align-items:center;justify-content:center}
.zoom{position:absolute;right:10px;top:395px;width:40px;height:81px;background:#fff;border-radius:2px;box-shadow:0 1px 4px -1px rgba(0,0,0,.3);display:flex;flex-direction:column;align-items:center;justify-content:space-between;padding:11px 0}
.zoom hr{width:30px;height:1px;border:0;background:#e6e6e6;margin:0}
.credits{position:absolute;right:0;bottom:0;height:13px;background:rgba(245,245,245,.75);display:flex;gap:12px;padding:0 6px 0 4px;font:10px/13px Roboto,sans-serif;letter-spacing:.12px;color:#000;white-space:nowrap}
.share{display:flex;align-items:center;justify-content:flex-end;gap:16px;margin:39px 15.500px 0 0;height:20px;font-size:16px;fill:#2f3640}
.share span{margin-right:4px;margin-top:1px;letter-spacing:.05px}
footer{margin-top:51px;height:60px;background:#2f3640;color:#fff;font-size:17.600px;font-weight:700;line-height:20px;padding:40px 30px 0}
```
